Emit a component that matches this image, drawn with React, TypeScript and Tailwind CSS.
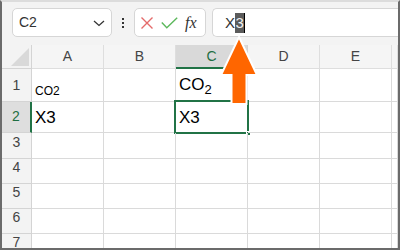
import React from "react";

const F = { fontFamily: '"Liberation Sans", Arial, sans-serif' };

function Toolbar() {
  return (
    <div className="h-[43px] bg-[#f3f3f3] flex items-start pt-[6px] pl-[10px]" style={F}>
      <div className="w-[100px] h-[29px] bg-white border border-[#d6d6d6] rounded-[5px] flex items-center pl-[6px] pr-[4px] justify-between">
        <span className="text-[14px] text-[#333]">C2</span>
        <svg width="12" height="8" viewBox="0 0 12 8" className="mr-[2px]">
          <path d="M1 2 L6 6.5 L11 2" fill="none" stroke="#333" strokeWidth="1.3" />
        </svg>
      </div>
      <div className="w-[22px] h-[29px] flex flex-col items-center justify-center gap-[2px]">
        <div className="w-[2px] h-[2px] bg-[#333]" />
        <div className="w-[2px] h-[2px] bg-[#333]" />
        <div className="w-[2px] h-[2px] bg-[#333]" />
      </div>
      <div className="w-[72px] h-[29px] bg-white border border-[#d6d6d6] rounded-[5px] flex items-center pl-[5px] gap-[7px]">
        <svg width="14" height="14" viewBox="0 0 14 14">
          <path d="M1.5 1.5 L12.5 12.5 M12.5 1.5 L1.5 12.5" stroke="#e46a6a" strokeWidth="1.4" fill="none" />
        </svg>
        <svg width="17" height="12" viewBox="0 0 17 12">
          <path d="M0.8 5.5 L5.8 10.8 L16.2 0.8" stroke="#5cb85c" strokeWidth="1.4" fill="none" />
        </svg>
        <span className="text-[16px] italic text-[#333] leading-none" style={{ fontFamily: '"Liberation Serif", "Times New Roman", serif' }}>fx</span>
      </div>
      <div className="ml-[6px] flex-1 h-[29px] bg-white border border-[#d6d6d6] border-r-0 rounded-l-[5px] flex items-center pl-[12px]">
        <span className="text-[15px] text-[#333] leading-none">X</span>
        <span className="text-[15px] text-[#f0f0f0] bg-[#5b5b5b] leading-[20px] px-[0.5px]">3</span>
        <span className="w-[1px] h-[20px] bg-black" />
      </div>
    </div>
  );
}

const cols = ["A", "B", "C", "D", "E", ""];
const rowHeights = ["h-[33px]", "h-[31px]", "h-[26px]", "h-[25px]", "h-[25px]", "h-[25px]", "h-[25px]"];

function Grid() {
  return (
    <div className="grid grid-cols-[30px_72px_72px_72px_72px_72px_1fr]" style={F}>
      <div className="h-[24px] bg-[#f3f3f3] border-r border-b border-[#d4d4d4] flex items-end justify-end pr-[2px] pb-[2px]">
        <svg width="18" height="18" viewBox="0 0 18 18">
          <path d="M18 0 L18 18 L0 18 Z" fill="#d9d9d9" />
        </svg>
      </div>
      {cols.map((c, ci) =>
        c === "C" ? (
          <div key={ci} className="h-[24px] bg-[#d9d9d9] border-r border-[#d4d4d4] border-b-2 border-b-[#217346] flex items-center justify-center text-[14px] text-[#1e6e42]">
            {c}
          </div>
        ) : (
          <div key={ci} className="h-[24px] bg-[#f5f5f5] border-r border-b border-[#dedede] flex items-center justify-center text-[14px] text-[#444]">
            {c}
          </div>
        )
      )}
      {rowHeights.map((h, i) => {
        const r = i + 1;
        const active = r === 2;
        return (
          <React.Fragment key={r}>
            <div
              className={`${h} border-b flex items-end justify-center pb-[5px] text-[14px] ${
                active
                  ? "bg-[#dedede] border-b-[#d4d4d4] border-r-2 border-r-[#217346] text-[#1e6e42]"
                  : "bg-[#f3f3f3] border-r border-[#d4d4d4] text-[#444]"
              }`}
            >
              {r}
            </div>
            {cols.map((c, ci) => {
              let content: React.ReactNode = null;
              let extra = "";
              if (r === 1 && c === "A") {
                content = <span className="text-[12px] leading-none text-black">CO2</span>;
                extra = "pb-[4px]";
              } else if (r === 1 && c === "C") {
                content = (
                  <span className="text-[17px] leading-none text-black">
                    CO<span className="text-[13px] relative top-[4px]">2</span>
                  </span>
                );
                extra = "pb-[8px]";
              } else if (r === 2 && (c === "A" || c === "C")) {
                content = <span className="text-[17px] leading-none text-black">X3</span>;
                extra = "pb-[6px]";
              }
              const sel = r === 2 && c === "C";
              return (
                <div key={ci} className={`${h} relative border-r border-b border-[#dadada] flex items-end pl-[3px] ${extra}`}>
                  {content}
                  {sel && (
                    <div className="absolute left-[-2px] top-[-2px] right-[-2px] bottom-[-2px] border-2 border-[#217346]">
                      <div className="absolute right-[-4px] bottom-[-4px] w-[5px] h-[5px] bg-[#217346] border border-white" />
                    </div>
                  )}
                </div>
              );
            })}
          </React.Fragment>
        );
      })}
    </div>
  );
}

export default function App() {
  return (
    <div className="w-[400px] h-[250px] overflow-hidden relative bg-white border-2 border-[#6b6b6b] border-t-[#dcdcdc]">
      <Toolbar />
      <Grid />
      <svg className="absolute left-0 top-0" width="400" height="250" viewBox="0 0 400 250">
        <path
          d="M239 37 L257 75 L246.5 75 L246.5 104 L231.5 104 L231.5 75 L221 75 Z"
          fill="#ff6600"
          stroke="#ffffff"
          strokeWidth="2"
          strokeLinejoin="miter"
          transform="translate(-2,-2)"
        />
      </svg>
    </div>
  );
}
